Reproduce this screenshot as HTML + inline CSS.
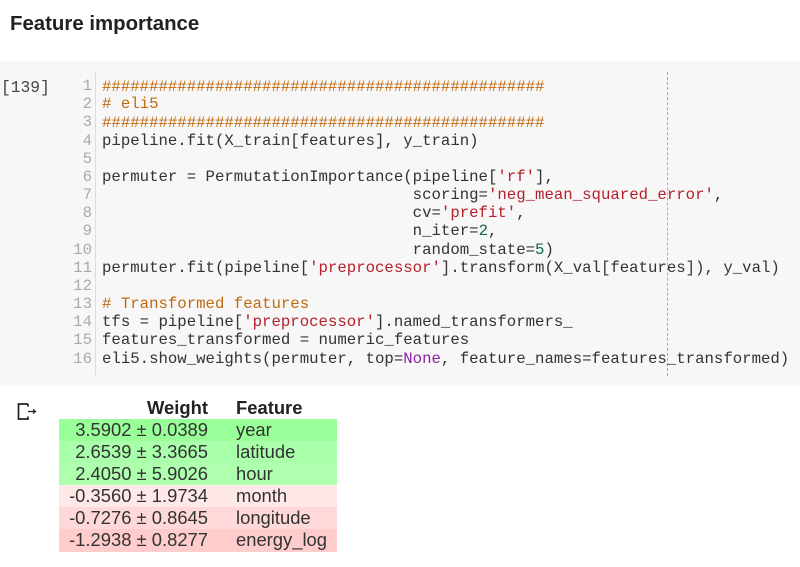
<!DOCTYPE html>
<html><head><meta charset="utf-8"><style>
html,body{margin:0;padding:0;background:#fff;width:800px;height:567px;overflow:hidden}
body{position:relative}
.a{position:absolute;white-space:pre}
#bg{position:absolute;left:0;top:61px;width:800px;height:325px;background:#f7f7f7}
#gut{position:absolute;left:95px;top:72px;width:1px;height:304px;background:#ddd}
#rul{position:absolute;left:667px;top:72px;height:304px;border-left:1px dashed #aaa}
h1{position:absolute;left:10px;top:11px;margin:0;font:bold 20.4px/26px "Liberation Sans",sans-serif;color:#212121;white-space:pre}
.p{font:16.3px/18px "Liberation Mono",monospace;color:#444}
.n{font:15.7px/18px "Liberation Mono",monospace;color:#aaa;width:92px;left:0;text-align:right}
.c{font:15.7px/18px "Liberation Mono",monospace;color:#333;left:102px;z-index:2}
.h{color:#c06a10}.s{color:#b5202a}.g{color:#116644}.k{color:#8f1fa8}
.r{position:absolute;left:59px;width:278px;height:22px}
.t{font:18.4px/22px "Liberation Sans",sans-serif;color:#333}
.w{left:59px;width:149px;text-align:right}
.f{left:236px}
.b{font-weight:bold;color:#222}
</style></head><body>
<h1>Feature importance</h1>
<div id="bg"></div><div id="gut"></div><div id="rul"></div>
<div class="a p" style="left:1px;top:79px">[139]</div>

<div class="a n" style="top:77px">1</div><div class="a n" style="top:95px">2</div><div class="a n" style="top:113px">3</div><div class="a n" style="top:132px">4</div><div class="a n" style="top:150px">5</div><div class="a n" style="top:168px">6</div><div class="a n" style="top:186px">7</div><div class="a n" style="top:204px">8</div><div class="a n" style="top:222px">9</div><div class="a n" style="top:241px">10</div><div class="a n" style="top:259px">11</div><div class="a n" style="top:277px">12</div><div class="a n" style="top:295px">13</div><div class="a n" style="top:313px">14</div><div class="a n" style="top:331px">15</div><div class="a n" style="top:350px">16</div>

<div class="a c h" style="top:78px">###############################################</div>
<div class="a c h" style="top:95px"># eli5</div>
<div class="a c h" style="top:114px">###############################################</div>
<div class="a c" style="top:132px">pipeline.fit(X_train[features], y_train)</div>
<div class="a c" style="top:168px">permuter = PermutationImportance(pipeline[<span class="s">'rf'</span>],</div>
<div class="a c" style="top:186px">                                 scoring=<span class="s">'neg_mean_squared_error'</span>,</div>
<div class="a c" style="top:204px">                                 cv=<span class="s">'prefit'</span>,</div>
<div class="a c" style="top:222px">                                 n_iter=<span class="g">2</span>,</div>
<div class="a c" style="top:241px">                                 random_state=<span class="g">5</span>)</div>
<div class="a c" style="top:259px">permuter.fit(pipeline[<span class="s">'preprocessor'</span>].transform(X_val[features]), y_val)</div>
<div class="a c h" style="top:295px"># Transformed features</div>
<div class="a c" style="top:313px">tfs = pipeline[<span class="s">'preprocessor'</span>].named_transformers_</div>
<div class="a c" style="top:331px">features_transformed = numeric_features</div>
<div class="a c" style="top:350px">eli5.show_weights(permuter, top=<span class="k">None</span>, feature_names=features_transformed)</div>

<svg class="a" style="left:17px;top:402px" width="20" height="20" viewBox="0 0 20 20" fill="none" stroke="#222">
<path d="M11 2H1.5V17H11V14.5M11 4.5V2" stroke-width="1.7"/>
<path d="M11 9.5H18.5M16 7.5L18.5 9.5L16 11.5" stroke-width="1.2"/>
</svg>

<div class="r" style="top:419px;background:#99ff99"></div>
<div class="r" style="top:441px;background:#aaffaa"></div>
<div class="r" style="top:463px;background:#aeffae"></div>
<div class="r" style="top:485px;background:#ffe8e8"></div>
<div class="r" style="top:507px;background:#ffd9d9"></div>
<div class="r" style="top:529px;background:#ffcccc;height:23px"></div>

<div class="a t w b" style="top:397px">Weight</div><div class="a t f b" style="top:397px">Feature</div>
<div class="a t w" style="top:419px">3.5902 ± 0.0389</div><div class="a t f" style="top:419px">year</div>
<div class="a t w" style="top:441px">2.6539 ± 3.3665</div><div class="a t f" style="top:441px">latitude</div>
<div class="a t w" style="top:463px">2.4050 ± 5.9026</div><div class="a t f" style="top:463px">hour</div>
<div class="a t w" style="top:485px">-0.3560 ± 1.9734</div><div class="a t f" style="top:485px">month</div>
<div class="a t w" style="top:507px">-0.7276 ± 0.8645</div><div class="a t f" style="top:507px">longitude</div>
<div class="a t w" style="top:529px">-1.2938 ± 0.8277</div><div class="a t f" style="top:529px">energy_log</div>
</body></html>
